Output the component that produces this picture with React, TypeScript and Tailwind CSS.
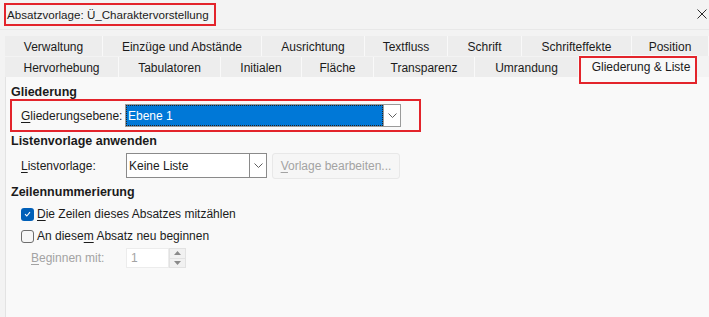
import React from "react";

const FONT = { fontFamily: "'Segoe UI', 'Liberation Sans', Arial, sans-serif" };

const row1 = [
  { label: "Verwaltung", w: "w-[98px]" },
  { label: "Einzüge und Abstände", w: "w-[159px]" },
  { label: "Ausrichtung", w: "w-[103px]" },
  { label: "Textfluss", w: "w-[83px]" },
  { label: "Schrift", w: "w-[74px]" },
  { label: "Schrifteffekte", w: "w-[110px]" },
  { label: "Position", w: "w-[77px]" },
];

const row2 = [
  { label: "Hervorhebung", w: "w-[114px]" },
  { label: "Tabulatoren", w: "w-[102px]" },
  { label: "Initialen", w: "w-[81px]" },
  { label: "Fläche", w: "w-[72px]" },
  { label: "Transparenz", w: "w-[101px]" },
  { label: "Umrandung", w: "w-[104px]" },
];

function Chevron() {
  return (
    <svg width="9" height="5" viewBox="0 0 9 5" fill="none">
      <path d="M0.5 0.5 L4.5 4.5 L8.5 0.5" stroke="#5f5f5f" strokeWidth="1" />
    </svg>
  );
}

function Tab({ label, w }: { label: string; w: string }) {
  return (
    <div className={`${w} shrink-0 h-full flex items-center justify-center pt-[2px] bg-[#ededed] border-r border-[#f9f9f9] text-[#1b1b1b]`}>
      {label}
    </div>
  );
}

export default function App() {
  return (
    <div
      className="w-[709px] h-[317px] bg-[#f3f3f3] flex flex-col overflow-hidden text-[12px] text-[#1b1b1b] leading-[16px]"
      style={FONT}
    >
      {/* Title bar */}
      <div className="h-[30px] shrink-0 flex items-center justify-between border-b border-[#e8e8e8] bg-[#f3f3f3]">
        <span className="ml-[4px] h-[23px] w-[212px] flex items-center border-2 border-[#e3242b] pl-[1px] text-[11.6px] whitespace-nowrap overflow-hidden">
          Absatzvorlage: Ü_Charaktervorstellung
        </span>
        <svg width="10" height="10" viewBox="0 0 10 10" className="mr-[2px] mt-[-1px]">
          <path d="M0.5 0.5 L9.5 9.5 M9.5 0.5 L0.5 9.5" stroke="#2b2b2b" strokeWidth="1" />
        </svg>
      </div>

      {/* Tabs */}
      <div className="pl-[5px] pt-[6px] shrink-0">
        <div className="flex h-[20px]">
          {row1.map((t) => (
            <Tab key={t.label} {...t} />
          ))}
        </div>
        <div className="flex h-[20px] mt-[1px]">
          {row2.map((t) => (
            <Tab key={t.label} {...t} />
          ))}
          <div className="relative w-[118px] shrink-0 h-[22px] -mt-[2px] bg-[#f9f9f9] flex items-start justify-center pt-[4px] pl-[6px] z-10">
            Gliederung &amp; Liste
            <div className="absolute left-0 top-[1px] w-[118px] h-[28px] border-2 border-[#e3242b]" />
          </div>
        </div>
      </div>

      {/* Panel */}
      <div className="flex-1 ml-[5px] bg-[#f9f9f9] border-l border-[#e3e3e3] pl-[4px] pt-[7px]">
        <div className="pl-[1px] font-bold text-[12.5px]">Gliederung</div>

        <div className="w-[411px] h-[33px] -mt-[1px] border-2 border-[#e3242b] flex items-center pl-[9px]">
          <span className="w-[104px] shrink-0">
            <u className="underline-offset-2">G</u>liederungsebene:
          </span>
          <div className="w-[276px] h-[23px] flex border border-[#9a9a9a] bg-white">
            <div className="flex-1 bg-[#0078d7] text-white pl-[2px] flex items-center outline-1 outline-dotted outline-[#222] -outline-offset-1">
              Ebene 1
            </div>
            <div className="w-[17px] flex items-center justify-center bg-white border-l border-[#9a9a9a]">
              <Chevron />
            </div>
          </div>
        </div>

        <div className="pl-[1px] mt-[1px] font-bold text-[12.5px]">Listenvorlage anwenden</div>

        <div className="flex items-center mt-[4px] h-[25px] pl-[11px]">
          <span className="w-[105px] shrink-0">
            <u className="underline-offset-2">L</u>istenvorlage:
          </span>
          <div className="w-[141px] h-[25px] flex border border-[#8a8a8a] bg-white">
            <div className="flex-1 pl-[2px] flex items-center">Keine Liste</div>
            <div className="w-[17px] flex items-center justify-center border-l border-[#8a8a8a]">
              <Chevron />
            </div>
          </div>
          <div className="ml-[5px] w-[128px] h-[26px] flex items-center justify-center rounded-[3px] border border-[#e8e8e8] bg-[#f6f6f6] text-[#a3a3a3]">
            <span>
              <u className="underline-offset-2">V</u>orlage bearbeiten...
            </span>
          </div>
        </div>

        <div className="pl-[1px] mt-[6px] font-bold text-[12.5px]">Zeilennummerierung</div>

        <div className="flex items-center h-[20px] mt-[4px] pl-[11px] gap-[3px]">
          <span className="w-[13px] h-[13px] rounded-[3px] bg-[#005fb8] flex items-center justify-center">
            <svg width="7" height="6" viewBox="0 0 7 6" fill="none">
              <path d="M1 3.2 L2.8 5 L6 1.2" stroke="#ffffff" strokeWidth="1.1" />
            </svg>
          </span>
          <span>
            <u className="underline-offset-2">D</u>ie Zeilen dieses Absatzes mitzählen
          </span>
        </div>

        <div className="flex items-center h-[20px] mt-[2px] pl-[11px] gap-[3px]">
          <span className="w-[13px] h-[13px] rounded-[3px] border border-[#6e6e6e] bg-[#f7f7f7]" />
          <span>
            An diese<u className="underline-offset-2">m</u> Absatz neu beginnen
          </span>
        </div>

        <div className="flex items-center h-[20px] mt-[2px] pl-[21px] text-[#a3a3a3]">
          <span className="w-[95px] shrink-0">
            <u className="underline-offset-2">B</u>eginnen mit:
          </span>
          <div className="w-[60px] h-[20px] flex">
            <div className="flex-1 bg-white border border-[#ececec] pl-[4px] flex items-center">1</div>
            <div className="w-[17px] flex flex-col bg-[#f1f1f1] border border-[#e2e2e2]">
              <div className="flex-1 flex items-center justify-center border-b border-[#e2e2e2]">
                <svg width="7" height="4" viewBox="0 0 7 4">
                  <path d="M0 4 L3.5 0 L7 4 Z" fill="#8a8a8a" />
                </svg>
              </div>
              <div className="flex-1 flex items-center justify-center">
                <svg width="7" height="4" viewBox="0 0 7 4">
                  <path d="M0 0 L3.5 4 L7 0 Z" fill="#8a8a8a" />
                </svg>
              </div>
            </div>
          </div>
        </div>
      </div>
    </div>
  );
}
